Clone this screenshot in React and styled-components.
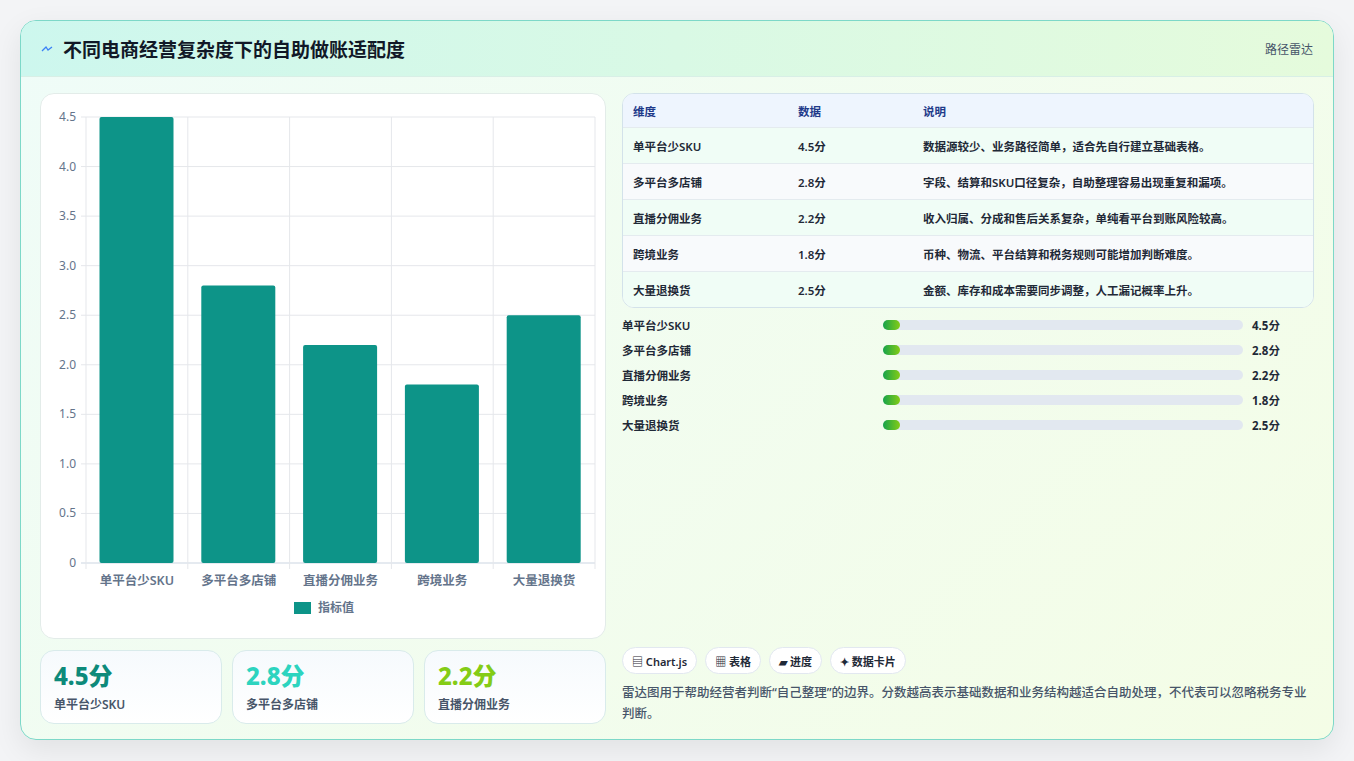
import React from "react";
import styled, { createGlobalStyle } from "styled-components";

const G = createGlobalStyle`
  body{margin:0;background:#f3f4f6;font-family:"Noto Sans","Noto Sans CJK SC",sans-serif;}
`;
const data = [
  ["单平台少SKU", 4.5, "数据源较少、业务路径简单，适合先自行建立基础表格。"],
  ["多平台多店铺", 2.8, "字段、结算和SKU口径复杂，自助整理容易出现重复和漏项。"],
  ["直播分佣业务", 2.2, "收入归属、分成和售后关系复杂，单纯看平台到账风险较高。"],
  ["跨境业务", 1.8, "币种、物流、平台结算和税务规则可能增加判断难度。"],
  ["大量退换货", 2.5, "金额、库存和成本需要同步调整，人工漏记概率上升。"],
];
const Page = styled.div`padding:20px 20px 20px 20px;height:761px;box-sizing:border-box;`;
const Card = styled.div`width:1314px;height:720px;box-sizing:border-box;border:1px solid #7dd8c8;border-radius:16px;
  background:linear-gradient(135deg,#effcf8,#f4fde6);box-shadow:0 10px 30px rgba(0,0,0,.08);overflow:hidden;display:flex;flex-direction:column;`;
const Header = styled.div`height:55px;flex:none;display:flex;align-items:center;justify-content:space-between;padding:0 20px;
  background:linear-gradient(90deg,#cdf7ee,#e5fbdc);border-bottom:1px solid #d8efe6;`;
const Title = styled.h1`margin:0;font-size:19px;font-weight:700;color:#111827;display:flex;align-items:center;gap:10px;`;
const Tag = styled.span`font-size:12px;color:#475569;`;
const Body = styled.div`flex:1;display:grid;grid-template-columns:566px 692px;gap:16px;padding:16px 19px 18px 19px;`;
const Col = styled.div`display:flex;flex-direction:column;gap:11px;`;
const ChartBox = styled.div`height:544px;background:#fff;border:1px solid #e3ece9;border-radius:14px;`;
const Stats = styled.div`display:grid;grid-template-columns:repeat(3,1fr);gap:10px;`;
const Stat = styled.div`height:74px;box-sizing:border-box;border:1px solid #d9ebeb;border-radius:14px;background:linear-gradient(180deg,#f6fafd,#fff);padding:10px 13px;`;
const Big = styled.div`font-size:24px;font-weight:800;color:${p=>p.c};line-height:30px;`;
const Small = styled.div`font-size:12px;font-weight:600;color:#475569;margin-top:4px;`;
const Table = styled.div`border:1px solid #d3e2ea;border-radius:12px;overflow:hidden;background:#fff;`;
const Row = styled.div`display:grid;grid-template-columns:165px 125px 1fr;height:${p=>p.h}px;align-items:center;padding-left:10px;font-size:11.5px;
  color:${p=>p.head?"#1e3a8a":"#1f2937"};font-weight:600;background:${p=>p.bg};border-top:${p=>p.head?"none":"1px solid #e4ebef"};`;
const Bars = styled.div`display:flex;flex-direction:column;gap:7px;margin-top:8px;`;
const BarRow = styled.div`display:grid;grid-template-columns:261px 360px 1fr;align-items:center;height:18px;font-size:11.5px;font-weight:600;color:#1f2937;`;
const Track = styled.div`height:10px;border-radius:5px;background:#e2e8f0;`;
const Fill = styled.div`height:10px;width:17px;border-radius:5px;background:linear-gradient(90deg,#16a34a,#84cc16);`;
const Val = styled.span`padding-left:9px;font-weight:700;`;
const Spacer = styled.div`flex:1;`;
const Chips = styled.div`display:flex;gap:8px;`;
const Chip = styled.span`height:27px;box-sizing:border-box;padding:0 9px;border:1px solid #e2e8f0;border-radius:14px;background:#fff;font-size:11px;font-weight:600;color:#1f2937;display:flex;align-items:center;gap:4px;`;
const Para = styled.p`margin:8px 0 0;font-size:12.5px;line-height:21px;color:#475569;font-weight:500;`;

function Chart(){
  const x0=45,x1=554,y0=469,yt=23,cw=(x1-x0)/5,s=(y0-yt)/4.5;
  const ticks=[0,.5,1,1.5,2,2.5,3,3.5,4,4.5];
  return <svg width="566" height="544" style={{display:"block"}}>
    {ticks.map(t=>{const y=y0-t*s;return <g key={t}>
      <line x1={x0-5} x2={x1} y1={y} y2={y} stroke={t===0?"#cbd5e1":"#e5e7eb"}/>
      <text x={x0-10} y={y+4} textAnchor="end" fontSize="12" fill="#64748b">{t===0?"0":t.toFixed(1)}</text></g>})}
    {[0,1,2,3,4,5].map(i=><line key={i} x1={x0+i*cw} x2={x0+i*cw} y1={yt} y2={y0+6} stroke="#e5e7eb"/>)}
    {data.map((d,i)=>{const h=d[1]*s;return <g key={i}>
      <rect x={x0+i*cw+13.5} y={y0-h} width={74} height={h} rx="2" fill="#0d9488"/>
      <text x={x0+i*cw+cw/2} y={491} textAnchor="middle" fontSize="12.5" fontWeight="600" fill="#64748b">{d[0]}</text></g>})}
    <rect x="253" y="508" width="17" height="12" fill="#0d9488"/>
    <text x="277" y="518" fontSize="12" fontWeight="600" fill="#64748b">指标值</text>
  </svg>;
}

export default function App(){
  return <Page><G/><Card>
    <Header><Title><svg width="12" height="8" viewBox="0 0 12 8"><path d="M1 6l4-4 2 3 4-3" stroke="#3b82f6" strokeWidth="1.3" fill="none"/></svg>不同电商经营复杂度下的自助做账适配度</Title><Tag>路径雷达</Tag></Header>
    <Body>
      <Col>
        <ChartBox><Chart/></ChartBox>
        <Stats>
          <Stat><Big c="#0d8a7a">4.5分</Big><Small>单平台少SKU</Small></Stat>
          <Stat><Big c="#2dd4bf">2.8分</Big><Small>多平台多店铺</Small></Stat>
          <Stat><Big c="#84cc16">2.2分</Big><Small>直播分佣业务</Small></Stat>
        </Stats>
      </Col>
      <Col style={{gap:0}}>
        <Table>
          <Row head h={33} bg="#eef5fe"><span>维度</span><span>数据</span><span>说明</span></Row>
          {data.map((d,i)=><Row key={i} h={35} bg={i%2?"#f8fafc":"#f0fdf6"}><span>{d[0]}</span><span>{d[1].toFixed(1)}分</span><span>{d[2]}</span></Row>)}
        </Table>
        <Bars>{data.map((d,i)=><BarRow key={i}><span>{d[0]}</span><Track><Fill/></Track><Val>{d[1].toFixed(1)}分</Val></BarRow>)}</Bars>
        <Spacer/>
        <Chips><Chip>▤ Chart.js</Chip><Chip>▦ 表格</Chip><Chip>▰ 进度</Chip><Chip>✦ 数据卡片</Chip></Chips>
        <Para>雷达图用于帮助经营者判断“自己整理”的边界。分数越高表示基础数据和业务结构越适合自助处理，不代表可以忽略税务专业判断。</Para>
      </Col>
    </Body>
  </Card></Page>;
}
